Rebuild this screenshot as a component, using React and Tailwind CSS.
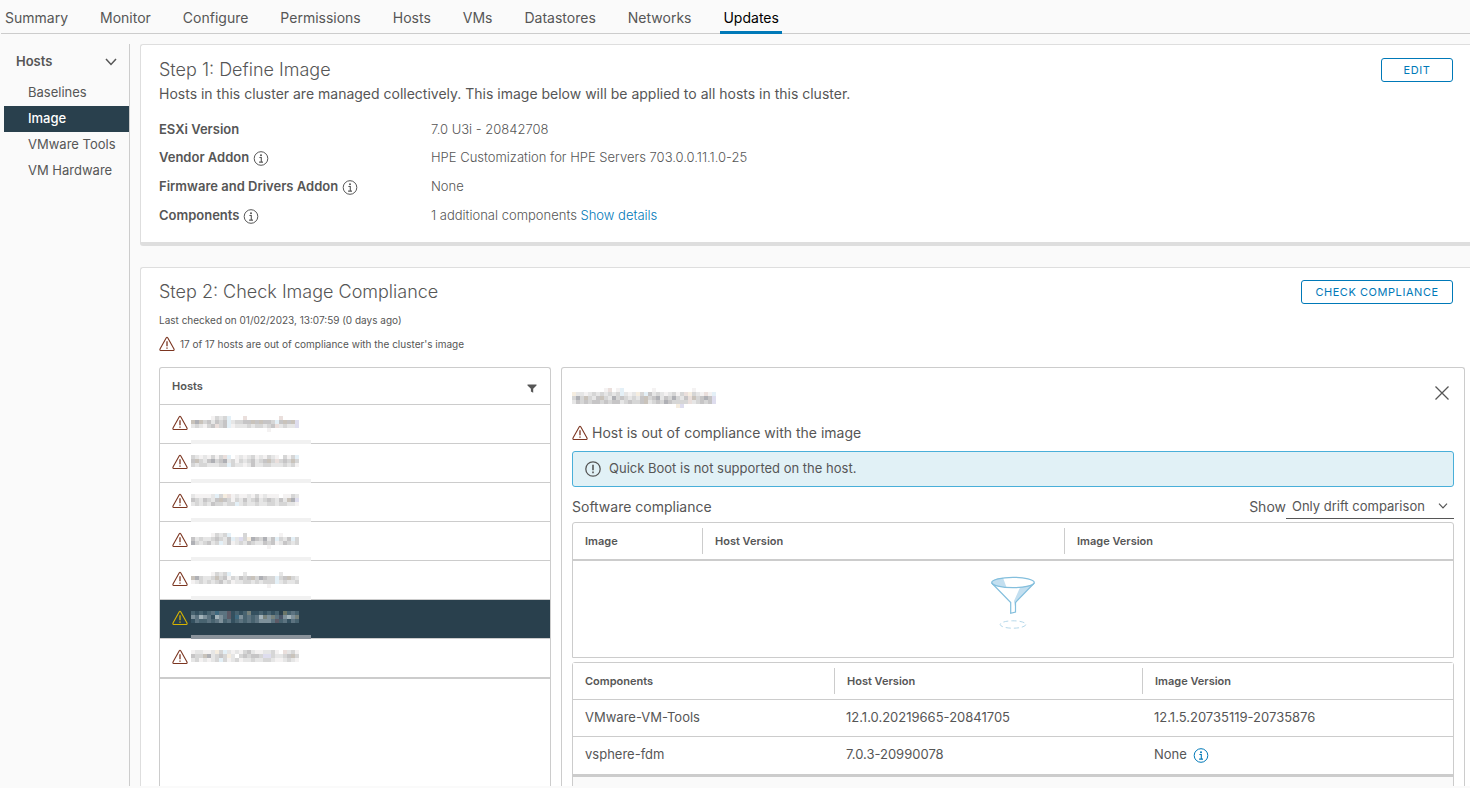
import React, { useState } from 'react';

const tabs = ['Summary', 'Monitor', 'Configure', 'Permissions', 'Hosts', 'VMs', 'Datastores', 'Networks', 'Updates'];
const sideItems = ['Baselines', 'Image', 'VMware Tools', 'VM Hardware'];

// colours of the mosaic that hides the host names, one letter for each cell
const lightPalette = {
  a: '#f4f2f2', b: '#e6e6e6', c: '#d6d6d6', d: '#c6c5c6', e: '#afb0b5',
  k: '#c9c3bb', p: '#eadfdc', s: '#e4f0f7', v: '#deddee', w: '#f5ede0',
};
const darkPalette = {
  a: '#34505f', b: '#486370', c: '#5c7380', d: '#7e919b', e: '#a3b3ba',
  k: '#77827c', p: '#5d5a66', s: '#3f6a80', v: '#4a5568', w: '#6c7668',
};

const hosts = [
  ['.....acbcs...p........p....', 'kekcdbdcdsbccddkdkddcsdkdkv', 'bcbacdpcdsabbbcbccbcdpbcbbv', '...................a.......'],
  ['cbabacacps.ababcabacba.cacs', 'dkcbdecdebcacbcdbcdkcpcdckc', 'cbccbbbccscbbabdbbccbbbcbca'],
  ['baaaabscwpabaabacabaaa.aacb', 'dcbdcbdkdcacbdbcdbcdcbdbkev', 'bcbcbdccbccsbcbbcbbccbccbba'],
  ['.....acbcs...c........a....', 'dbcbbcdcbdsbvcwedcebdscbdsc', 'ecbcdbcsbdabcbdcbbdcdabdcbc', '...................a.......'],
  ['.....acbcs...b........b....', 'kecbbckcdacbdcdkcedccscdkcb', 'abcbcbcdbcabbccbcbcccsbcbbc', '...................a.......'],
  ['bababcsccpababkaababab.wbcb', 'dcedcaedcpasdbcbcekdkcvdedk', 'acbbcbcdbcabcbcbcdddcpbcacb'],
  ['abbaabwcsbabacdbaabbca.pbca', 'dcckebcdcwb.cdcddcvvcbbcdkc', 'bcababcscabcabbcbbccbaabcba'],
];

const headingMosaic = [
  '........ap.as.......a.........a.....',
  'wbbabcbcbcbcsbabwcsdbcbabcacpwcbapas',
  'ceckcbdkcbecdcbcbdkcdebdcecbdpkcdedv',
  'bdcdcddcdcddbcdccdkbcdcedccccpbcdcdv',
  '..........................wv........',
];

const imageFields = [
  { label: 'ESXi Version', value: '7.0 U3i - 20842708', info: false },
  { label: 'Vendor Addon', value: 'HPE Customization for HPE Servers 703.0.0.11.1.0-25', info: true },
  { label: 'Firmware and Drivers Addon', value: 'None', info: true },
  { label: 'Components', value: '1 additional components', info: true, link: 'Show details' },
];

const components = [
  { name: 'VMware-VM-Tools', host: '12.1.0.20219665-20841705', image: '12.1.5.20735119-20735876' },
  { name: 'vsphere-fdm', host: '7.0.3-20990078', image: 'None', info: true },
];

function Mosaic({ rows, dark }) {
  const palette = dark ? darkPalette : lightPalette;
  const cols = rows[0].length;
  return (
    <svg width={cols * 4} height={rows.length * 4} shapeRendering="crispEdges" aria-hidden="true" className="block shrink-0">
      {rows.map((row, y) =>
        row.split('').map((cell, x) =>
          palette[cell] ? <rect key={x + '-' + y} x={x * 4} y={y * 4} width="4" height="4" fill={palette[cell]} /> : null
        )
      )}
    </svg>
  );
}

function WarningIcon({ className }) {
  return (
    <svg width="16" height="16" viewBox="0 0 16 16" fill="none" stroke="currentColor" strokeLinejoin="round" className={className} aria-hidden="true">
      <path d="M7.3 1.8 L1 13.1 Q.5 14.3 1.7 14.5 L14.3 14.5 Q15.5 14.3 15 13.1 L8.7 1.8 Q8 .8 7.3 1.8Z" strokeWidth="1.1" />
      <path d="M8 5.2 V10.2 M8 11.4 V12.8" strokeWidth="1.3" />
    </svg>
  );
}

function InfoIcon({ className }) {
  return (
    <svg width="16" height="16" viewBox="0 0 16 16" fill="none" stroke="currentColor" className={className} aria-hidden="true">
      <circle cx="8" cy="8.5" r="6.8" strokeWidth="1" />
      <circle cx="8" cy="5.2" r="1" fill="currentColor" stroke="none" />
      <path d="M6.4 7.5 H8.3 V12 M6.1 12.1 H10" strokeWidth="1.1" />
    </svg>
  );
}

// Funnel shown in the table when there are no rows
function EmptyFunnel() {
  return (
    <svg width="46" height="54" viewBox="0 0 46 54" fill="none" aria-hidden="true">
      <path d="M1.5 6.5 C3 3.5 8 2 13 1.7 L16.5 11.3 C8 10.8 2 9 1.5 6.5Z" fill="#c3dff0" />
      <path d="M30 11.5 L43 8.5 L26 26 V36 L24 25Z" fill="#c3dff0" />
      <ellipse cx="23" cy="6.5" rx="21.3" ry="5.2" stroke="#84bfdd" strokeWidth="1.2" />
      <path d="M1.7 7 L20.7 26.5 V37.3 L25.5 36 V26.5 L44.3 7" stroke="#84bfdd" strokeWidth="1.2" />
      <ellipse cx="23" cy="48.5" rx="12.8" ry="3.7" stroke="#b5d8ea" strokeWidth="1" strokeDasharray="5 3" />
    </svg>
  );
}

function OutlineButton({ children, className }) {
  return (
    <button type="button" className={'h-6 rounded-[3px] border border-[#0079b8] bg-white text-[11px] tracking-wider text-[#0079b8] ' + className}>
      {children}
    </button>
  );
}

// column titles have a short line between them, and not the full cell height
function HeadCell({ children, first, className = '' }) {
  return (
    <th className={'p-0 text-left text-[11px] font-semibold ' + className}>
      <div className={'flex h-[26px] items-center border-l pl-3 ' + (first ? 'border-transparent pl-[11px]' : 'border-[#ccc]')}>
        {children}
      </div>
    </th>
  );
}

function App() {
  const [selected, setSelected] = useState(5);
  const [show, setShow] = useState('drift');

  return (
    <div className="flex h-screen flex-col overflow-hidden bg-[#fafafa] font-['Inter','Liberation_Sans',sans-serif] text-[13px] text-[#565656]">
      {/* Tabs */}
      <nav className="ml-px flex h-[34px] shrink-0 gap-[26px] border-b border-[#ccc] pl-px">
        {tabs.map((tab) => (
          <a
            key={tab}
            href="#"
            className={
              tab === 'Updates'
                ? '-mb-px flex items-center border-b-3 border-[#0079b8] px-[3px] pt-1 text-sm text-black'
                : '-mb-px flex items-center border-b-3 border-transparent px-[3px] pt-1 text-sm'
            }
          >
            {tab}
          </a>
        ))}
      </nav>

      <div className="mb-[2px] flex min-h-0 flex-1 overflow-hidden pt-[10px]">
        {/* Left menu */}
        <aside className="w-[130px] shrink-0 border-r border-[#ccc] pl-1">
          <button type="button" className="flex h-9 w-full items-center justify-between pr-3 pl-3 font-semibold">
            Hosts
            <svg width="12" height="8" viewBox="0 0 12 8" fill="none" stroke="currentColor" strokeWidth="1.5" aria-hidden="true">
              <path d="M1 1 L6 6.5 L11 1" />
            </svg>
          </button>
          <ul>
            {sideItems.map((item) => (
              <li key={item}>
                <a
                  href="#"
                  className={
                    item === 'Image'
                      ? 'flex h-[26px] items-center bg-[#29404d] pl-6 font-medium text-white'
                      : 'flex h-[26px] items-center pl-6'
                  }
                >
                  {item}
                </a>
              </li>
            ))}
          </ul>
        </aside>

        <main className="ml-[10px] flex min-w-0 flex-1 flex-col gap-[21px]">
          {/* Step 1 */}
          <section className="shrink-0 rounded-l-[3px] border-t border-b-4 border-l border-[#dedede] bg-white pt-[13px] pr-[17px] pb-3 pl-[18px]">
            <div className="flex items-start justify-between">
              <div>
                <h2 className="text-lg leading-6 font-light">Step 1: Define Image</h2>
                <p className="text-sm leading-6">
                  Hosts in this cluster are managed collectively. This image below will be applied to all hosts in this cluster.
                </p>
              </div>
              <OutlineButton className="w-[72px]">EDIT</OutlineButton>
            </div>
            <dl className="mt-[11px]">
              {imageFields.map((field) => (
                <div key={field.label} className={field.info ? 'flex h-[29px] items-center' : 'flex h-[26px] items-center'}>
                  <dt className="flex w-[272px] shrink-0 items-center gap-1 font-semibold">
                    {field.label}
                    {field.info && <InfoIcon />}
                  </dt>
                  <dd className="font-light">
                    {field.value} {field.link && <a href="#" className="text-[#0079b8]">{field.link}</a>}
                  </dd>
                </div>
              ))}
            </dl>
          </section>

          {/* Step 2 */}
          <section className="flex min-h-0 flex-1 flex-col rounded-tl-[3px] border-t border-l border-[#dedede] bg-white pt-3 pl-[18px]">
            <div className="flex items-start justify-between pr-[17px]">
              <h2 className="text-lg leading-6 font-light">Step 2: Check Image Compliance</h2>
              <OutlineButton className="w-[152px]">CHECK COMPLIANCE</OutlineButton>
            </div>
            <p className="mt-2 text-[10px] leading-4">Last checked on 01/02/2023, 13:07:59 (0 days ago)</p>
            <p className="mt-2 flex items-center gap-[5px] text-[10px] leading-4">
              <WarningIcon className="text-[#7b3520]" />
              17 of 17 hosts are out of compliance with the cluster's image
            </p>

            <div className="mt-[15px] flex min-h-0 flex-1 gap-[10px] pr-[5px]">
              {/* Host list */}
              <div className="w-[392px] shrink-0 rounded-t-[3px] border border-b-0 border-[#ccc]">
                <div className="flex h-9 items-center justify-between pr-[13px] pl-3">
                  <h3 className="text-[11px] font-semibold">Hosts</h3>
                  <button type="button" aria-label="Filter hosts" className="pt-1">
                    <svg width="10" height="9" viewBox="0 0 10 9" fill="currentColor" aria-hidden="true">
                      <path d="M.5 .5 H9.5 V1.5 L6.2 4.8 V8.7 L3.9 7.6 V4.8 L.5 1.5Z" />
                    </svg>
                  </button>
                </div>
                <ul className="border-b border-[#ccc]">
                  {hosts.map((rows, i) => (
                    <li key={i} className="relative border-t border-b border-[#ccc] not-last:border-b-0">
                      <button
                        type="button"
                        aria-label={'Host ' + (i + 1)}
                        onClick={() => setSelected(i)}
                        className={
                          i === selected
                            ? 'flex h-[38px] w-full items-start gap-1 bg-[#29404d] pl-3 text-left'
                            : 'flex h-[38px] w-full items-start gap-1 pl-3 text-left'
                        }
                      >
                        <WarningIcon className={i === selected ? 'mt-[10px] text-[#d8b500]' : 'mt-[10px] text-[#7b3520]'} />
                        <span className="-ml-px pt-[11px]">
                          <Mosaic rows={rows} dark={i === selected} />
                        </span>
                      </button>
                      {i < hosts.length - 1 && (
                        <span
                          className={
                            i === selected
                              ? 'absolute -bottom-px left-[31px] z-10 h-1 w-[120px] bg-[#8a939b]'
                              : 'absolute -bottom-px left-[31px] z-10 h-1 w-[120px] bg-[#f1f1f1]'
                          }
                        />
                      )}
                    </li>
                  ))}
                </ul>
              </div>

              {/* Host details */}
              <div className="min-w-0 flex-1 overflow-hidden rounded-t-[3px] border border-b-0 border-[#ccc] px-[10px]">
                <div className="flex h-[54px] items-start justify-between pt-[18px] pr-[5px]">
                  <h3 aria-label="Host name" className="pt-[2px]">
                    <Mosaic rows={headingMosaic} />
                  </h3>
                  <button type="button" aria-label="Close">
                    <svg width="14" height="14" viewBox="0 0 14 14" fill="none" stroke="currentColor" strokeWidth="1.3" aria-hidden="true">
                      <path d="M.5 .5 L13.5 13.5 M13.5 .5 L.5 13.5" />
                    </svg>
                  </button>
                </div>
                <p className="flex h-[22px] items-center gap-1 text-sm">
                  <WarningIcon className="text-[#7b3520]" />
                  Host is out of compliance with the image
                </p>
                <div className="mt-[7px] flex h-9 items-center gap-2 rounded-[3px] border border-[#49afd9] bg-[#e1f1f6] pl-3">
                  <svg width="16" height="16" viewBox="0 0 16 16" fill="none" stroke="currentColor" aria-hidden="true">
                    <circle cx="8" cy="8" r="7.2" strokeWidth="1.3" />
                    <path d="M8 3.8 V9.2 M8 10.6 V12.2" strokeWidth="1.6" />
                  </svg>
                  Quick Boot is not supported on the host.
                </div>

                <div className="mt-[7px] flex h-[25px] items-center justify-between">
                  <h4 className="text-sm">Software compliance</h4>
                  <div className="flex h-full items-center">
                    <label htmlFor="show" className="text-sm">Show</label>
                    <div className="relative h-full">
                      <select
                        id="show"
                        value={show}
                        onChange={(e) => setShow(e.target.value)}
                        className="h-full w-[168px] appearance-none border-b border-[#565656] bg-transparent pt-[2px] pl-[6px]"
                      >
                        <option value="drift">Only drift comparison</option>
                        <option value="full">Full comparison</option>
                      </select>
                      <svg width="10" height="6" viewBox="0 0 10 6" fill="none" stroke="currentColor" strokeWidth="1.2" className="pointer-events-none absolute top-[9px] right-[6px]" aria-hidden="true">
                        <path d="M1 .7 L5 4.9 L9 .7" />
                      </svg>
                    </div>
                  </div>
                </div>

                <div className="mt-[3px] rounded-t-[3px] border border-[#ccc]">
                  <table className="w-full table-fixed border-collapse">
                    <thead>
                      <tr className="h-[37px] border-b-2 border-[#ccc]">
                        <HeadCell first className="w-[129px]">Image</HeadCell>
                        <HeadCell className="w-[362px]">Host Version</HeadCell>
                        <HeadCell>Image Version</HeadCell>
                      </tr>
                    </thead>
                    <tbody>
                      <tr>
                        <td colSpan={3} className="h-[97px] p-0">
                          <div className="flex justify-center pb-3">
                            <EmptyFunnel />
                          </div>
                        </td>
                      </tr>
                    </tbody>
                  </table>
                </div>

                <div className="mt-1 rounded-t-[3px] border border-[#ccc] bg-[#fafafa] pb-5">
                  <table className="w-full table-fixed border-collapse bg-white">
                    <thead>
                      <tr className="h-9 border-b border-[#ccc]">
                        <HeadCell first className="w-[261px]">Components</HeadCell>
                        <HeadCell className="w-[308px]">Host Version</HeadCell>
                        <HeadCell>Image Version</HeadCell>
                      </tr>
                    </thead>
                    <tbody>
                      {components.map((row) => (
                        <tr key={row.name} className="h-[37px] border-b border-[#ccc] last:h-[39px] last:border-b-3">
                          <td className="py-0 pl-3">{row.name}</td>
                          <td className="py-0 pl-3">{row.host}</td>
                          <td className="py-0 pl-3">
                            <span className="flex items-center gap-[6px]">
                              {row.image}
                              {row.info && <InfoIcon className="text-[#0079b8]" />}
                            </span>
                          </td>
                        </tr>
                      ))}
                    </tbody>
                  </table>
                </div>
              </div>
            </div>
          </section>
        </main>
      </div>
    </div>
  );
}

export default App;
